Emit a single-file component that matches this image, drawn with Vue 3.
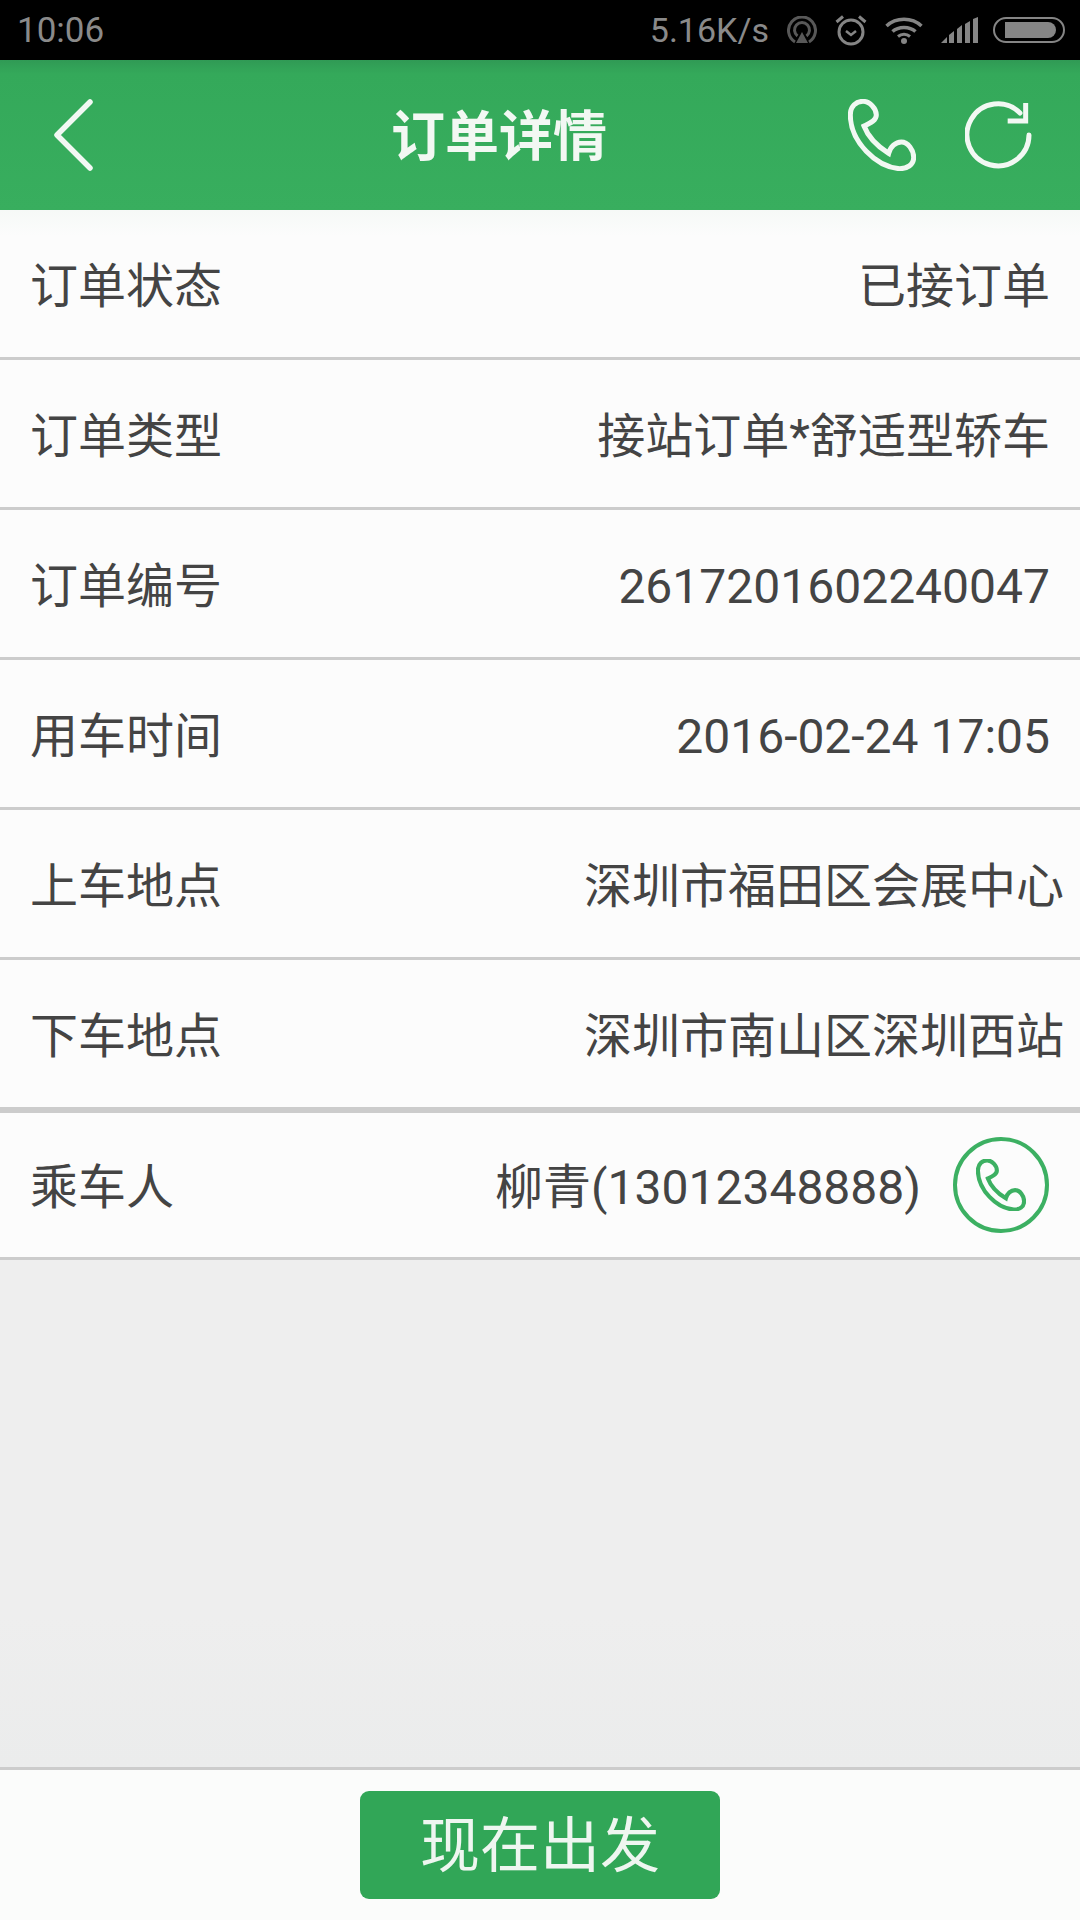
<script setup>
const phonePath = 'M7 47C7 20 25 6 45 6C65 6 85 27 85 47C85 64 65 72 48 80C60 112 90 142 122 162C127 142 143 128 160 128C180 128 197 152 197 174C197 197 177 208 155 208C85 204 7 127 7 47Z'

const rows = [
  { label: '订单状态', value: '已接订单' },
  { label: '订单类型', value: '接站订单*舒适型轿车' },
  { label: '订单编号', value: '2617201602240047', num: true },
  { label: '用车时间', value: '2016-02-24 17:05', num: true },
  { label: '上车地点', value: '深圳市福田区会展中心', wide: true },
  { label: '下车地点', value: '深圳市南山区深圳西站', wide: true },
]
</script>

<template>
  <div class="page">
    <!-- 状态栏 -->
    <div class="status-bar">
      <span class="time">10:06</span>
      <div class="status-right">
        <span class="speed">5.16K/s</span>
        <svg class="ic-cast" width="30" height="28" viewBox="0 0 30 28" fill="none" stroke="#585858" stroke-width="3">
          <path d="M8 26A13.5 13.5 0 1 1 22 26" />
          <path d="M10.500 20A7.500 7.500 0 1 1 19.500 20" />
          <path d="M15 16L21 27H9Z" fill="#585858" stroke="none" />
        </svg>
        <svg width="32" height="32" viewBox="0 0 32 32" fill="none" stroke="#858585" stroke-width="3">
          <circle cx="16" cy="18" r="12" />
          <path d="M11 17L16 21L21 17" stroke-width="2.500" />
          <path d="M1.500 8L8 2.500M30.500 8L24 2.500" />
        </svg>
        <svg width="38" height="27" viewBox="0 0 38 27" fill="none" stroke="#858585" stroke-width="3.500">
          <path d="M1.500 9C11 0 27 0 36.500 9" />
          <path d="M7.500 14.500C13.500 9 24.500 9 30.500 14.500" />
          <path d="M13 19.500C16.500 16.500 21.500 16.500 25 19.500" stroke-width="3" />
          <circle cx="19" cy="24" r="3" fill="#858585" stroke="none" />
        </svg>
        <svg class="ic-signal" width="37" height="26" viewBox="0 0 37 26" fill="#858585">
          <path d="M0 26L6 20V26Z" />
          <path d="M8 26V18L13 14V26Z" />
          <path d="M16 26V12L21 8V26Z" />
          <path d="M24 26V7L29 4V26Z" />
          <path d="M32 26V2L37 0V26Z" />
        </svg>
        <div class="battery"><div class="battery-fill"></div></div>
      </div>
    </div>

    <!-- 标题栏 -->
    <div class="header">
      <div class="header-left">
        <svg width="40" height="72" viewBox="0 0 40 72" fill="none" stroke="#f2f8f3" stroke-width="5.500" stroke-linecap="round" stroke-linejoin="round">
          <path d="M36 3L3 36L36 69" />
        </svg>
      </div>
      <div class="title">订单详情</div>
      <div class="header-right">
        <svg width="68" height="72" viewBox="0 0 204 214" fill="none" stroke="#f2f8f3" stroke-width="15">
          <path :d="phonePath" />
        </svg>
        <svg width="68" height="68" viewBox="0 0 204 204" fill="none" stroke="#f2f8f3" stroke-width="15" stroke-linecap="round">
          <path d="M192 102A93 93 0 1 1 165 36" />
          <path d="M182 6V60H128" stroke-linecap="butt" />
        </svg>
      </div>
    </div>

    <!-- 订单信息 -->
    <div class="list">
      <div v-for="row in rows" :key="row.label" class="row">
        <span class="label">{{ row.label }}</span>
        <span class="value" :class="{ wide: row.wide, num: row.num }">{{ row.value }}</span>
      </div>
      <div class="row passenger">
        <span class="label">乘车人</span>
        <div class="contact">
          <span class="value">柳青(13012348888)</span>
          <div class="call-btn">
            <svg width="50" height="52" viewBox="0 0 204 214" fill="none" stroke="#3cb062" stroke-width="17">
              <path :d="phonePath" />
            </svg>
          </div>
        </div>
      </div>
    </div>

    <div class="spacer"></div>

    <!-- 底部按钮 -->
    <div class="footer">
      <div class="go-btn">现在出发</div>
    </div>
  </div>
</template>

<style>
body {
  margin: 0;
  background: #eee;
}
</style>

<style scoped>
.page {
  display: flex;
  flex-direction: column;
  width: 1080px;
  height: 1920px;
  background: #eee;
  font-family: Roboto, "Noto Sans CJK SC", sans-serif;
  overflow: hidden;
}

.status-bar {
  display: flex;
  justify-content: space-between;
  align-items: center;
  height: 60px;
  padding: 0 15px 0 17px;
  box-sizing: border-box;
  background: #000;
  color: #8a8a8a;
  font-size: 34px;
}
.time {
  font-size: 35px;
}
.status-right {
  display: flex;
  align-items: center;
  gap: 18px;
}
.ic-signal {
  margin-right: -3px;
}
.battery {
  width: 72px;
  height: 26px;
  box-sizing: border-box;
  border: 2px solid #858585;
  border-radius: 13px;
  padding: 3px 7px 3px 10px;
}
.battery-fill {
  height: 100%;
  background: #858585;
  border-radius: 0 8px 8px 0;
}

.header {
  display: flex;
  align-items: center;
  height: 150px;
  background: linear-gradient(#309a55 0, #34a95a 14px, #38ae5e 100%);
}
.header-left {
  display: flex;
  width: 150px;
  padding-left: 54px;
  box-sizing: border-box;
}
.title {
  flex: 1;
  text-align: center;
  font-size: 54px;
  font-weight: 700;
  color: #f2f8f3;
  padding-bottom: 5px;
}
.header-right {
  display: flex;
  align-items: center;
  gap: 49px;
  padding-right: 47px;
}

.row {
  display: flex;
  justify-content: space-between;
  align-items: center;
  height: 150px;
  box-sizing: border-box;
  padding: 0 30px 4px 30px;
  background: #fcfcfc;
  border-bottom: 3px solid #ccc;
  color: #444;
  font-size: 48px;
}
.row:first-child {
  background: linear-gradient(#f6f9f7 0, #fcfcfc 26px);
}
.value.num {
  margin-top: 9px;
}
.value.wide {
  margin-right: -14px;
}
.passenger {
  border-top: 3px solid #ccc;
  padding: 0 31px 0 30px;
}
.passenger .label,
.passenger .value {
  margin-bottom: 4px;
}
.contact {
  display: flex;
  align-items: center;
  gap: 32px;
}
.call-btn {
  display: flex;
  align-items: center;
  justify-content: center;
  width: 96px;
  height: 96px;
  box-sizing: border-box;
  border: 4px solid #3cb062;
  border-radius: 50%;
}

.spacer {
  flex: 1;
  background: linear-gradient(#eee 70%, #ebecec 100%);
}

.footer {
  display: flex;
  justify-content: center;
  align-items: center;
  height: 153px;
  box-sizing: border-box;
  border-top: 3px solid #ccc;
  background: #fbfcfb;
}
.go-btn {
  width: 360px;
  height: 108px;
  line-height: 112px;
  text-align: center;
  background: #31a657;
  border-radius: 9px;
  color: #eef6f0;
  font-size: 60px;
}
</style>
